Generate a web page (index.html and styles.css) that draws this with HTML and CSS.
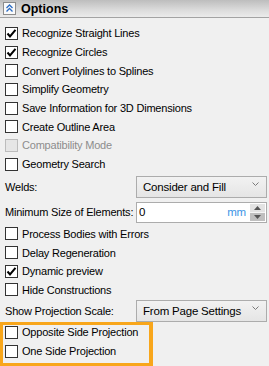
FILE: index.html
```html
<!DOCTYPE html>
<html lang="en">
<head>
    <meta charset="UTF-8">
    <title>Options</title>
    <link rel="stylesheet" href="styles.css">
</head>
<body>
    <div class="panel">
        <div class="panel-head">
            <span class="collapse-btn">
                <svg width="9" height="9" viewBox="0 0 9 9"><polyline points="1.5,4 4.5,1 7.5,4" fill="none" stroke="#2b6cc4" stroke-width="1.3"/><polyline points="1.5,7.5 4.5,4.5 7.5,7.5" fill="none" stroke="#2b6cc4" stroke-width="1.3"/></svg>
            </span>
            <span class="title">Options</span>
        </div>

        <div class="panel-body">
            <div class="check"><span class="box"><svg width="11" height="11" viewBox="0 0 11 11"><polyline points="1.5,5.5 4,8.5 9.5,1.8" fill="none" stroke="#000" stroke-width="2"/></svg></span>Recognize Straight Lines</div>
            <div class="check"><span class="box"><svg width="11" height="11" viewBox="0 0 11 11"><polyline points="1.5,5.5 4,8.5 9.5,1.8" fill="none" stroke="#000" stroke-width="2"/></svg></span>Recognize Circles</div>
            <div class="check"><span class="box"></span>Convert Polylines to Splines</div>
            <div class="check"><span class="box"></span>Simplify Geometry</div>
            <div class="check"><span class="box"></span>Save Information for 3D Dimensions</div>
            <div class="check"><span class="box"></span>Create Outline Area</div>
            <div class="check disabled"><span class="box"></span>Compatibility Mode</div>
            <div class="check"><span class="box"></span>Geometry Search</div>

            <div class="field welds">
                <span class="label">Welds:</span>
                <div class="select">Consider and Fill<svg class="arrow" width="7" height="4" viewBox="0 0 7 4"><polyline points="0.5,0.5 3.5,3.5 6.5,0.5" fill="none" stroke="#7a7a7a" stroke-width="1"/></svg></div>
            </div>

            <div class="field size">
                <span class="label">Minimum Size of Elements:</span>
                <div class="spin">
                    <span class="value">0</span>
                    <span class="unit">mm</span>
                    <span class="spin-btns">
                        <span class="up"><svg width="7" height="4" viewBox="0 0 7 4"><polygon points="0,4 3.5,0 7,4" fill="#555"/></svg></span>
                        <span class="down"><svg width="7" height="4" viewBox="0 0 7 4"><polygon points="0,0 3.5,4 7,0" fill="#555"/></svg></span>
                    </span>
                </div>
            </div>

            <div class="check"><span class="box"></span>Process Bodies with Errors</div>
            <div class="check"><span class="box"></span>Delay Regeneration</div>
            <div class="check"><span class="box"><svg width="11" height="11" viewBox="0 0 11 11"><polyline points="1.5,5.5 4,8.5 9.5,1.8" fill="none" stroke="#000" stroke-width="2"/></svg></span>Dynamic preview</div>
            <div class="check"><span class="box"></span>Hide Constructions</div>

            <div class="field scale">
                <span class="label">Show Projection Scale:</span>
                <div class="select">From Page Settings<svg class="arrow" width="7" height="4" viewBox="0 0 7 4"><polyline points="0.5,0.5 3.5,3.5 6.5,0.5" fill="none" stroke="#7a7a7a" stroke-width="1"/></svg></div>
            </div>

            <div class="highlight">
                <div class="check"><span class="box"></span>Opposite Side Projection</div>
                <div class="check"><span class="box"></span>One Side Projection</div>
            </div>
        </div>
    </div>
</body>
</html>
```

FILE: styles.css
```css
/* Page */
body {
    margin: 0;
    background: #f0f0f0;
    font-family: "Liberation Sans", Arial, sans-serif;
    font-size: 11px;
    letter-spacing: -0.2px;
    color: #000;
    width: 269px;
    height: 366px;
    overflow: hidden;
}

/* Panel header */
.panel-head {
    height: 17px;
    border-bottom: 1px solid #a3a3a3;
    background: linear-gradient(#bdbdbd, #dcdcdc 60%, #ebebeb);
    display: flex;
    align-items: center;
    padding-left: 3px;
}

.collapse-btn {
    width: 11px;
    height: 11px;
    border: 1px solid #8c8c8c;
    background: #fafafa;
    display: flex;
    align-items: center;
    justify-content: center;
}

.title {
    margin-left: 5px;
    font-weight: bold;
    font-size: 12.5px;
    letter-spacing: 0;
}

/* Body */
.panel-body {
    padding: 6px 0 0 5px;
}

.check {
    height: 18.7px;
    display: flex;
    align-items: center;
}

.box {
    width: 11px;
    height: 11px;
    border: 1px solid #333;
    background: #fff;
    margin-right: 4px;
    display: flex;
    align-items: center;
    justify-content: center;
    flex-shrink: 0;
}

.check.disabled {
    color: #8d8d8d;
}

.check.disabled .box {
    border-color: #bcbcbc;
    background: #e6e6e6;
}

/* Label + control rows */
.field {
    display: flex;
    align-items: center;
    justify-content: space-between;
    padding-right: 2px;
}

.welds {
    margin-top: 2px;
}

.size {
    margin-top: 4px;
    margin-bottom: 2px;
}

.scale {
    margin-top: 1px;
}

.select {
    width: 116px;
    height: 20px;
    border: 1px solid #acacac;
    background: linear-gradient(#f2f2f2, #e5e5e5);
    display: flex;
    align-items: center;
    justify-content: space-between;
    padding: 0 7px 0 6px;
    font-size: 11.5px;
}

.arrow {
    margin-top: -6px;
}

.spin {
    width: 127px;
    height: 19px;
    border: 1px solid #acacac;
    background: #fff;
    display: flex;
    align-items: center;
    padding-left: 2px;
    font-size: 11.5px;
}

.value {
    flex: 1;
}

.unit {
    color: #3d95e6;
    margin-right: 4px;
}

.spin-btns {
    width: 15px;
    height: 17px;
    display: flex;
    flex-direction: column;
    margin-right: 1px;
}

.spin-btns span {
    flex: 1;
    display: flex;
    align-items: center;
    justify-content: center;
}

.up {
    background: #e3e3e3;
    border-bottom: 1px solid #f5f5f5;
}

.down {
    background: #bfbfbf;
}

/* Orange highlight around the last two options */
.highlight {
    width: 144px;
    margin-left: -5px;
    padding-left: 2px;
    border: 3px solid #f8a61b;
    border-right-width: 4px;
}

.highlight .check {
    height: 19px;
    align-items: flex-start;
}

.highlight .box {
    margin-top: 1px;
}

.highlight .check span + * ,
.highlight .check {
    line-height: 15px;
}
```
